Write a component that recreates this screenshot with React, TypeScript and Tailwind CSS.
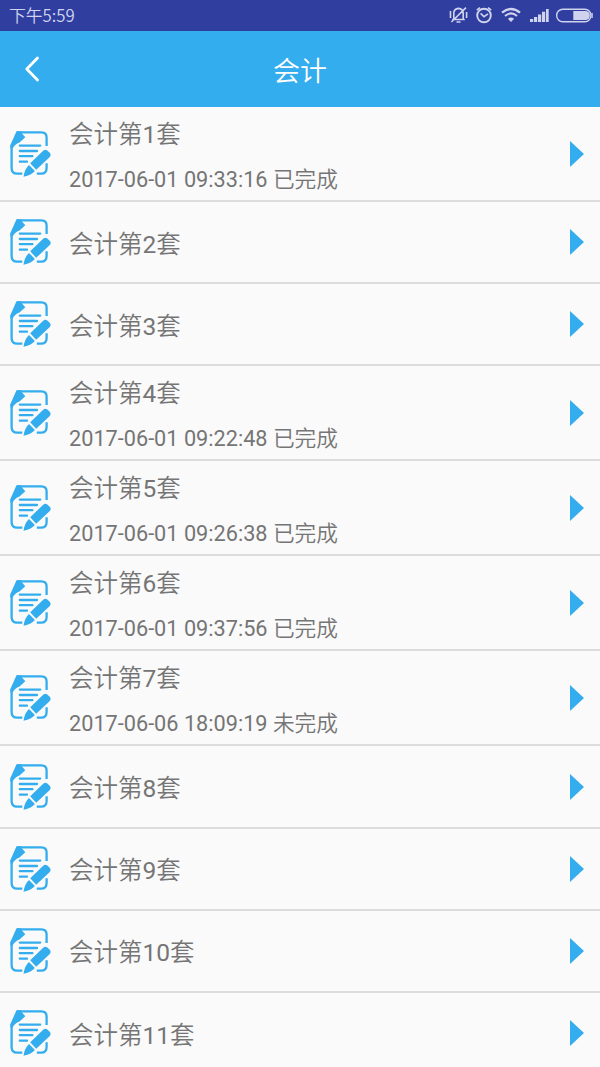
type Item = { title: string; status?: string };

const items: Item[] = [
  { title: "会计第1套", status: "2017-06-01 09:33:16 已完成" },
  { title: "会计第2套" },
  { title: "会计第3套" },
  { title: "会计第4套", status: "2017-06-01 09:22:48 已完成" },
  { title: "会计第5套", status: "2017-06-01 09:26:38 已完成" },
  { title: "会计第6套", status: "2017-06-01 09:37:56 已完成" },
  { title: "会计第7套", status: "2017-06-06 18:09:19 未完成" },
  { title: "会计第8套" },
  { title: "会计第9套" },
  { title: "会计第10套" },
  { title: "会计第11套" },
];

function PaperIcon() {
  return (
    <svg className="ml-[10px] h-[46px] w-[42px] shrink-0" viewBox="0 0 42 46" fill="none">
      <path
        d="M7 1.4H31.3Q36.6 1.4 36.6 6.7V15M1.6 14V37Q1.6 42.7 7.2 42.7H12.3M26.8 42.7H31Q36.6 42.7 36.6 37V32.2"
        stroke="#33adee"
        strokeWidth="2.3"
      />
      <path d="M6.5.2H11L12 2.5L15.3 6.3L9.5 11.6Q4.5 13.6 2.7 17.5H.4V14Z" fill="#33adee" />
      <path
        d="M9.8 14.6H30.2M9.8 20H27M9.8 25.2H22.4M9.8 30.7H17"
        stroke="#33adee"
        strokeWidth="2.3"
        strokeLinecap="round"
      />
      <path
        d="M20.2 32.3L33.2 19.7Q35.3 17.8 37.3 19.4L40 22.1Q41.5 24 39.8 26L26.2 38.8ZM19 33.9L24.9 39.9Q21.8 43.8 13.5 45.8Q14.6 37.8 19 33.9Z"
        fill="#33adee"
      />
    </svg>
  );
}

function StatusIcons() {
  return (
    <svg className="h-[30px] w-[152px]" viewBox="448 0 152 30" fill="none" stroke="#d0d3ee" strokeWidth="1.6">
      <path d="M452.2 19.5H464.8M453.8 19V13.2Q453.8 8.8 458.5 8.4Q463.2 8.8 463.2 13.2V19M456.5 22H460.5M451.4 22L466 7.6M450.5 11V18M466.6 12V18" />
      <circle cx="484" cy="15.5" r="6.8" strokeWidth="1.9" />
      <path d="M480.6 13.4L484 16.6L488 13.8M476.8 10.2L480 7.6M488 7.6L491.2 10.2" />
      <path d="M502 12.7Q511 5.2 520 12.7" strokeWidth="2.3" />
      <path d="M505 16Q511 10.9 517 16" strokeWidth="2.1" />
      <path d="M507.9 18.8Q511 16.3 514.1 18.8L511 22Z" fill="#d0d3ee" stroke="none" />
      <path d="M530 19H533.2V22H530ZM534 17H537.2V22H534ZM538 14.5H541.2V22H538ZM542 11.8H545.2V22H542ZM546 9H548.7V22H546Z" fill="#d0d3ee" stroke="none" />
      <rect x="556.7" y="9.2" width="34.2" height="12.6" rx="6" strokeWidth="1.4" />
      <path d="M573.3 11H585.8Q589.8 11.3 589.8 15.5T585.8 20H573.3Z" fill="#d0d3ee" stroke="none" />
      <path d="M592.1 13V18" strokeWidth="1.3" />
    </svg>
  );
}

function MixedText({ text }: { text: string }) {
  return text.split(/([\d:\- ]+)/).map((part, i) =>
    i % 2 ? (
      <span key={i} className="font-normal">
        {part}
      </span>
    ) : (
      part
    ),
  );
}

function Row({ title, status }: Item) {
  return (
    <li
      className={`flex shrink-0 items-center border-b-2 border-[#dcdcdc] ${status ? "h-[95px]" : "h-[82.2px]"}`}
    >
      <PaperIcon />
      <div className="ml-[17px] flex flex-1 flex-col pt-[5px] whitespace-nowrap">
        <span className="text-[24.5px] leading-[36px]">
          <MixedText text={title} />
        </span>
        {status && (
          <span className="mt-[11px] text-[21.7px] leading-[32px]">
            <MixedText text={status} />
          </span>
        )}
      </div>
      <svg className="mr-[16px] h-[26px] w-[14px]" viewBox="0 0 14 26">
        <path d="M0 0L14 13L0 26Z" fill="#33adee" />
      </svg>
    </li>
  );
}

export default function App() {
  return (
    <div className="flex h-[1067px] w-[600px] flex-col overflow-hidden bg-[#fafafa] font-['Roboto','Noto_Sans_CJK_SC',sans-serif] text-[#757575]">
      <div className="flex h-[30.5px] shrink-0 items-center justify-between bg-[#303f9f] pl-[9px] text-[#d0d3ee]">
        <span className="font-['Noto_Sans_CJK_SC',sans-serif] text-[16.8px] leading-[30px] font-[350]">下午5:59</span>
        <StatusIcons />
      </div>
      <header className="grid h-[76.6px] shrink-0 grid-cols-[1fr_auto_1fr] items-center bg-[#33adee] text-white">
        <svg className="ml-[24px] h-[26px] w-[16px]" viewBox="0 0 16 26" fill="none">
          <path d="M13.5 2L2.8 13L13.5 24" stroke="white" strokeWidth="2.8" strokeLinecap="round" strokeLinejoin="round" />
        </svg>
        <h1 className="pt-[6px] text-[27px] leading-[40px] font-[350]">会计</h1>
      </header>
      <ul className="flex flex-col font-[350]">
        {items.map((item) => (
          <Row key={item.title} {...item} />
        ))}
      </ul>
    </div>
  );
}
